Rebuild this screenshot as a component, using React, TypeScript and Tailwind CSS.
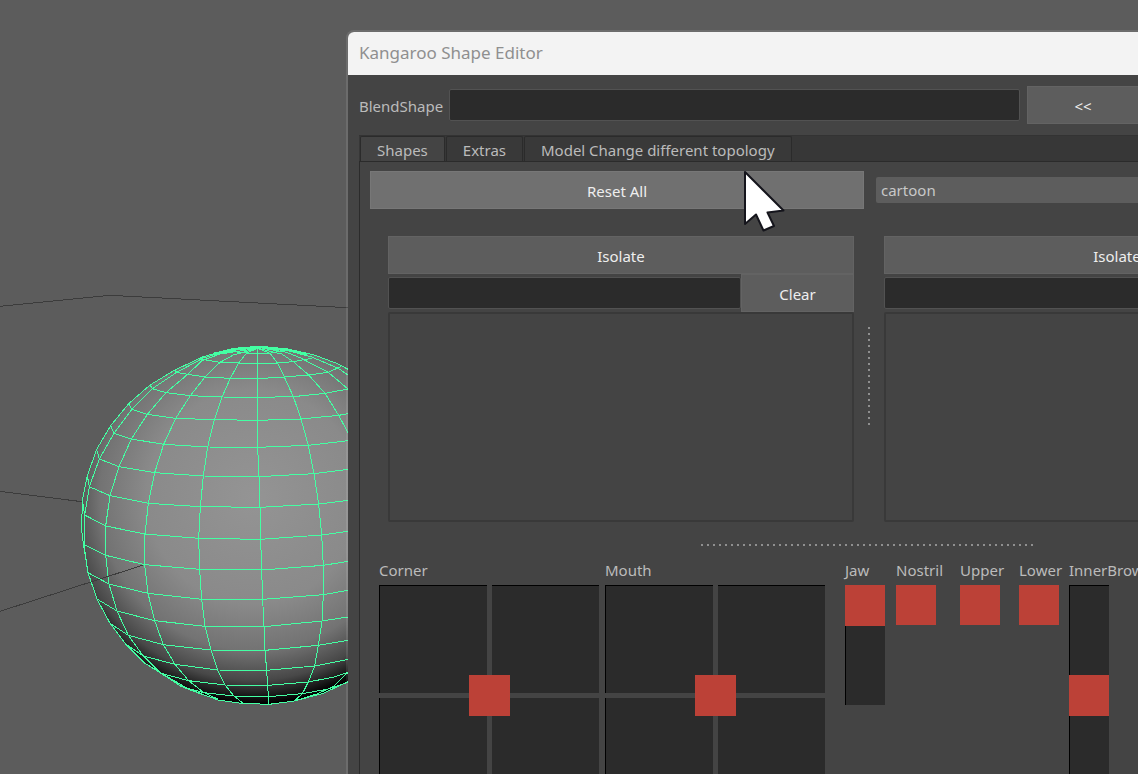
import { useState } from "react";

const SILHOUETTE =
  "864,118 835,102 760,74 680,57 600,50 520,55 430,80 345,120 270,165 206,221 152,287 110,358 82,437 67,510 65,600 70,640 84,728 111,807 150,880 198,943 255,1000 310,1033 390,1080 475,1110 545,1120 627,1123 703,1113 790,1090 864,1055";

const RINGS = [
  "510,64 560,69 593,71 630,70 665,62",
  "425,88 480,97 536,99 593,101 652,99 700,95 755,85",
  "345,120 350,127 383,133 435,141 511,145 593,146 673,141 746,135 805,127 842,110",
  "270,165 277,176 318,188 391,197 486,201 593,202 700,200 795,190 864,177",
  "206,221 216,238 262,253 347,265 463,269 593,271 723,267 836,256 864,251",
  "152,287 162,310 214,327 311,343 443,351 593,352 745,346 864,332",
  "110,358 118,387 177,410 284,428 430,438 597,440 762,431 864,418",
  "82,437 88,470 150,497 265,520 421,530 600,532 776,522 864,511",
  "67,510 74,555 137,588 255,612 416,625 602,628 785,615 864,604",
  "72,644 137,676 254,704 419,718 605,720 790,706 864,694",
  "84,728 147,762 264,790 425,808 608,808 790,794 864,781",
  "111,807 171,843 284,872 435,889 612,890 786,873 864,861",
  "150,880 205,916 310,944 453,960 615,961 775,946 864,931",
  "198,943 250,978 345,1003 473,1020 620,1021 764,1008 864,988",
  "255,1000 303,1030 386,1052 495,1065 623,1066 745,1056 822,1041 864,1027",
  "365,1070 432,1088 522,1098 625,1100 727,1091 800,1078 864,1057",
];

const MERIDIANS = [
  "593,55 593,352 597,440 600,532 602,628 605,720 608,808 612,890 615,961 620,1021 623,1066 625,1100 627,1122",
  "593,55 560,69 536,99 511,145 486,201 463,269 443,351 430,438 421,530 416,625 419,718 425,808 435,889 453,960 473,1020 495,1065 522,1098 548,1119",
  "593,55 520,75 480,97 435,141 391,197 347,265 311,343 284,428 265,520 255,612 254,704 264,790 284,872 310,944 345,1003 386,1052 432,1088 475,1108",
  "593,55 480,72 426,92 383,133 318,188 262,253 214,327 177,410 150,497 137,588 137,676 147,762 171,843 205,916 250,978 303,1030 365,1070 430,1093",
  "593,52 500,63 430,84 350,127 277,176 216,238 162,310 118,387 88,470 74,555 72,644 84,728",
  "593,55 630,70 652,99 673,141 700,200 723,267 745,346 762,431 776,522 785,615 790,706 790,794 786,873 775,946 764,1008 745,1056 727,1091 703,1113",
  "593,55 665,72 700,95 746,135 795,190 836,256 864,308",
  "593,52 680,67 720,83 805,127 864,177",
  "600,50 680,61 755,81 835,115 864,135",
  "703,1113 770,1092 820,1070 864,1027",
];

const Viewport = () => (
  <svg viewBox="0 0 1044 2322" className="block h-[774px] w-[348px]" aria-hidden="true">
    <defs>
      <radialGradient id="shade" gradientUnits="userSpaceOnUse" cx="580" cy="500" r="640">
        <stop offset="0" stopColor="#949494" />
        <stop offset="0.5" stopColor="#8a8a8a" />
        <stop offset="0.72" stopColor="#737373" />
        <stop offset="0.86" stopColor="#484848" />
        <stop offset="0.97" stopColor="#000000" />
      </radialGradient>
    </defs>
    <g fill="none" stroke="#3c3c3c" strokeWidth="3" shapeRendering="crispEdges">
      <polyline points="0,919 330,886 1044,923" />
      <polyline points="0,1474 245,1505" />
    </g>
    <g transform="translate(180 990)">
      <polygon points={SILHOUETTE} fill="url(#shade)" />
      <g fill="none" stroke="#43ffa3" strokeWidth="3" shapeRendering="crispEdges">
        <polyline points={SILHOUETTE} />
        <polyline points="460,72 530,57 600,51 680,59 740,72" strokeWidth="8" />
        {[...RINGS, ...MERIDIANS].map((points) => (
          <polyline key={points} points={points} />
        ))}
      </g>
    </g>
    <polyline points="0,1834 430,1695" fill="none" stroke="#3c3c3c" strokeWidth="3" shapeRendering="crispEdges" />
  </svg>
);

const Dots = ({ count }: { count: number }) => (
  <>
    {Array.from({ length: count }, (_, i) => (
      <span key={i} className="size-0.5 bg-[#8f8f8f]" />
    ))}
  </>
);

const buttonStyle = "h-[38px] border border-[#636363] bg-[#5d5d5d] pt-0.5 text-[#eeeeee]";
const fieldStyle = "min-w-0 flex-1 rounded-xs border border-[#525252] bg-[#2b2b2b] px-1 outline-none";

const ShapeList = ({ id, clearable = false }: { id: string; clearable?: boolean }) => {
  const [filter, setFilter] = useState("");

  return (
    <section className="flex min-w-0 flex-1 flex-col">
      <button id={id} className={buttonStyle}>
        Isolate
      </button>
      <div className="flex h-[38px] items-center">
        <input
          aria-labelledby={id}
          value={filter}
          onChange={(e) => setFilter(e.target.value)}
          className={`${fieldStyle} h-8`}
        />
        {clearable && (
          <button className={`${buttonStyle} w-[113px]`} onClick={() => setFilter("")}>
            Clear
          </button>
        )}
      </div>
      <ul className="h-[210px] rounded-xs border-2 border-[#393939]" />
    </section>
  );
};

const Pad = ({ label }: { label: string }) => (
  <div className="w-[220px]">
    <div id={label} className="h-[30px] leading-[30px]">
      {label}
    </div>
    <div className="relative grid h-[220px] grid-cols-2 grid-rows-2 gap-[5px]">
      <div className="border-t border-l border-black bg-[#2b2b2b]" />
      <div className="border-t border-black bg-[#2b2b2b]" />
      <div className="border-l border-black bg-[#2b2b2b]" />
      <div className="bg-[#2b2b2b]" />
      <button aria-labelledby={label} className="absolute inset-0 m-auto size-[41px] bg-[#bc4137]" />
    </div>
  </div>
);

const Slider = ({ label, width, height, value }: { label: string; width: string; height: string; value: number }) => (
  <div className={`${width} shrink-0`}>
    <label htmlFor={label} className="block h-[30px] leading-[30px] whitespace-nowrap">
      {label}
    </label>
    <input
      id={label}
      type="range"
      defaultValue={value}
      className={`${height} block w-10 appearance-none bg-[#2b2b2b] shadow-[inset_1px_1px_#000000] [writing-mode:vertical-lr] [&::-webkit-slider-thumb]:h-[41px] [&::-webkit-slider-thumb]:w-10 [&::-webkit-slider-thumb]:appearance-none [&::-webkit-slider-thumb]:bg-[#bc4137]`}
    />
  </div>
);

const Knob = ({ label, width }: { label: string; width: string }) => (
  <div className={`${width} shrink-0`}>
    <div id={label} className="h-[30px] leading-[30px]">
      {label}
    </div>
    <button aria-labelledby={label} className="block size-10 bg-[#bc4137]" />
  </div>
);

const Cursor = () => (
  <svg viewBox="0 0 44 64" className="pointer-events-none absolute top-[170px] left-[743px] h-16 w-11" aria-hidden="true">
    <path
      d="M2 2V54L13 44.500L20.500 60.500L31 56L24.500 42.500L40.500 40.500Z"
      fill="#ffffff"
      stroke="#15151c"
      strokeWidth="2"
      strokeLinejoin="round"
    />
  </svg>
);

const TABS = ["Shapes", "Extras", "Model Change different topology"];

export default function App() {
  const [tab, setTab] = useState("Shapes");

  return (
    <main className="relative h-screen overflow-hidden bg-[#5c5c5c] font-['Noto_Sans',sans-serif] text-[15px] text-[#bbbbbb]">
      <Viewport />

      <div className="absolute top-[30px] -right-[248px] left-[346px] rounded-tl-lg border-t-2 border-l-2 border-white/10 bg-[#444444] bg-clip-padding">
        <header className="flex h-[43px] items-center rounded-tl-md bg-[#f3f3f3] px-[11px] pb-0.5 text-[17px] text-[#8f8f8f]">
          <h1>Kangaroo Shape Editor</h1>
        </header>

        <div className="px-[11px] pt-[11px]">
          <div className="flex items-center pr-[236px]">
            <label htmlFor="blendshape" className="w-[90px] pt-0.5">
              BlendShape
            </label>
            <input id="blendshape" className={`${fieldStyle} h-8`} />
            <button className={`${buttonStyle} ml-[7px] w-28`}>&lt;&lt;</button>
          </div>

          <nav className="mt-[11px] flex h-[27px] items-end gap-px border-t border-b border-[#2b2b2b] border-t-[#333333] bg-[#373737] pl-px">
            {TABS.map((name) => (
              <button
                key={name}
                onClick={() => setTab(name)}
                className={`h-[25px] rounded-t-xs border border-b-0 border-[#2b2b2b] px-4 pt-0.5 ${
                  name === tab ? "bg-[#444444]" : "bg-[#393939]"
                }`}
              >
                {name}
              </button>
            ))}
          </nav>

          <div className="border-l border-[#2b2b2b] pt-[9px] pl-[10px]">
            <div className="mr-[11px] grid grid-cols-[494fr_488fr] items-center gap-3">
              <button id="reset" className="h-[38px] border border-[#777777] bg-[#707070] pt-0.5 text-[#eeeeee]">
                Reset All
              </button>
              <select
                aria-labelledby="reset"
                className="h-[26px] appearance-none rounded-xs bg-[#5d5d5d] px-[5px] text-[#c8c8c8]"
              >
                <option>cartoon</option>
              </select>
            </div>

            <div className="mt-[27px] mr-[25px] ml-[18px] flex">
              <ShapeList id="isolate-left" clearable />
              <div className="flex w-[30px] flex-col items-center justify-center gap-1 pb-[6px]">
                <Dots count={17} />
              </div>
              <ShapeList id="isolate-right" />
            </div>

            <div className="mt-[22px] mr-[11px] flex justify-center gap-1">
              <Dots count={56} />
            </div>

            <div className="mt-[9px] ml-[9px] flex items-start">
              <Pad label="Corner" />
              <div className="mr-5 ml-[6px]">
                <Pad label="Mouth" />
              </div>
              <Slider label="Jaw" width="w-[51px]" height="h-[120px]" value={0} />
              <Knob label="Nostril" width="w-16" />
              <Knob label="Upper" width="w-[59px]" />
              <Knob label="Lower" width="w-[50px]" />
              <Slider label="InnerBrow" width="w-20" height="h-[220px]" value={50} />
            </div>
          </div>
        </div>
      </div>

      <Cursor />
    </main>
  );
}
